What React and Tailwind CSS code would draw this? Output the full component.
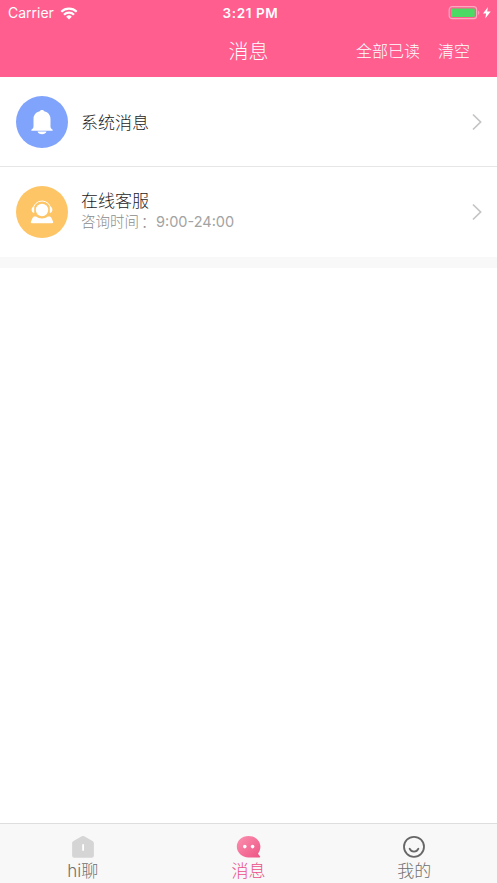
import React, { useState } from 'react';

const BellIcon = () => (
  <svg viewBox="0 0 52 52" className="w-full h-full" fill="#fff">
    <path d="M26 14c-1 0-1.800.5-2.200 1.300-4 .9-6.300 4-6.300 7.700v7.500c0 1.400-.8 2.200-1.900 3-.7.500-.5 1.200.2 1.200h20.400c.7 0 .9-.7.2-1.200-1.100-.8-1.900-1.600-1.900-3V23c0-3.700-2.300-6.800-6.300-7.700C27.800 14.500 27 14 26 14z" />
    <path d="M21.500 35.500h9c-.5 1.700-2.200 2.700-4.500 2.700s-4-1-4.500-2.700z" />
  </svg>
);

const ServiceIcon = () => (
  <svg viewBox="0 0 52 52" className="w-full h-full" fill="#fff">
    <circle cx="26" cy="24" r="6.200" />
    <path d="M17.200 23.500a8.800 8.500 0 0 1 17.600 0" fill="none" stroke="#fff" strokeWidth="1" />
    <path d="M18.200 20.500v6.500c-1.500 0-2.600-1.400-2.600-3.200s1.100-3.300 2.600-3.300zM33.800 20.500v6.500c1.500 0 2.600-1.400 2.600-3.200s-1.100-3.300-2.600-3.300z" />
    <path d="M18.800 30.500h1.300c1.600 1.200 3.600 1.900 5.900 1.900s4.300-.7 5.900-1.900h1.300c1.100 0 1.900.6 2.300 1.500l1.600 3.800c.3.700-.1 1.400-.9 1.400H15.800c-.8 0-1.200-.7-.9-1.400l1.600-3.800c.4-.9 1.200-1.500 2.300-1.500z" />
  </svg>
);

const WifiIcon = () => (
  <svg width="18" height="13" viewBox="0 0 18 13" fill="none" stroke="#fff" strokeWidth="2.300">
    <path d="M1.300 4.700a11 11 0 0 1 15.400 0" />
    <path d="M4 7.700a7 7 0 0 1 10 0" />
    <path d="M9 12.500L6.200 9.700a4 4 0 0 1 5.600 0z" fill="#fff" stroke="none" />
  </svg>
);

const BatteryIcon = () => (
  <svg width="43" height="14" viewBox="0 0 43 14">
    <rect x="1.200" y="0.700" width="27.400" height="12" rx="3" fill="none" stroke="#fff" strokeOpacity="0.450" strokeWidth="1.200" />
    <rect x="3" y="2.500" width="23.800" height="8.400" rx="1.200" fill="#4cd964" />
    <path d="M30.200 4.500c1.600.8 1.600 3.600 0 4.400z" fill="#fff" fillOpacity="0.450" />
    <path d="M40 .9L35 7.400h3.100l-.8 5.200 5.400-7h-3.500z" fill="#fff" />
  </svg>
);

const ArrowIcon = () => (
  <svg width="10" height="18" viewBox="0 0 10 18" fill="none" stroke="#c4c4c6" strokeWidth="1.700">
    <path d="M1 1.500L8.600 9 1 16.500" />
  </svg>
);

const HomeIcon = () => (
  <svg width="26" height="26" viewBox="0 0 26 26" className="shrink-0">
    <path d="M11.800 2.300a2.400 2.400 0 0 1 2.400 0l8.300 4.600a2.600 2.600 0 0 1 1.400 2.300v12.300a2.300 2.300 0 0 1-2.300 2.300H4.400a2.300 2.300 0 0 1-2.300-2.300V9.200c0-1 .5-1.800 1.400-2.300z" fill="#d5d5d5" />
    <rect x="12.200" y="10" width="1.800" height="7" rx="0.900" fill="#fff" />
  </svg>
);

const ChatIcon = () => (
  <svg width="26" height="26" viewBox="0 0 26 26" className="shrink-0">
    <defs>
      <linearGradient id="chat" x1="0" y1="0" x2="1" y2="1">
        <stop offset="0" stopColor="#fb91b1" />
        <stop offset="1" stopColor="#ee5485" />
      </linearGradient>
    </defs>
    <path d="M12.500 2C6 2 .8 6.600.8 12.600S6 23.500 12.500 23.500h10.800c1 0 1.200-.8.600-1.300l-1.900-2.500c1.500-1.900 2.400-4.300 2.400-7.100C24.400 6.600 19.200 2 12.500 2z" fill="url(#chat)" />
    <circle cx="8.800" cy="12.600" r="1.800" fill="#fff" />
    <circle cx="16.600" cy="12.600" r="1.800" fill="#fff" />
  </svg>
);

const SmileIcon = () => (
  <svg width="26" height="26" viewBox="0 0 26 26" fill="none" stroke="#666" strokeWidth="1.800" className="shrink-0">
    <circle cx="13" cy="12.800" r="10" />
    <path d="M8.600 14.700c1.800 4 7 4 8.800 0" strokeLinecap="round" />
  </svg>
);

const messages = [
  { title: '系统消息', color: 'bg-[#80a3fb]', icon: BellIcon },
  { title: '在线客服', desc: '咨询时间', time: '9:00-24:00', color: 'bg-[#fdc566]', icon: ServiceIcon },
];

const tabs = [
  { name: 'hi聊', icon: HomeIcon },
  { name: '消息', icon: ChatIcon },
  { name: '我的', icon: SmileIcon },
];

const App = () => {
  const [active, setActive] = useState(1);

  return (
    <div className="flex flex-col h-screen bg-white font-light font-['Inter','Noto_Sans_CJK_SC',sans-serif]">
      <header className="h-[77px] shrink-0 bg-[#ff5e8f] text-white">
        <div className="grid grid-cols-3 items-center h-[26px] pl-2 pr-1.5">
          <div className="flex items-center gap-1.5 text-sm font-normal">
            <span>Carrier</span>
            <WifiIcon />
          </div>
          <span className="text-center text-[13.500px] font-semibold tracking-[0.600px] pl-0.5">3:21 PM</span>
          <div className="flex justify-end">
            <BatteryIcon />
          </div>
        </div>
        <div className="grid grid-cols-[1fr_auto_1fr] items-center h-[50px] px-[27px]">
          <span />
          <h1 className="text-xl leading-none pt-0.5">消息</h1>
          <div className="flex justify-end gap-[18px] text-base leading-none">
            <button>全部已读</button>
            <button>清空</button>
          </div>
        </div>
      </header>

      <main className="flex-1">
        {messages.map((item, idx) => (
          <div
            key={item.title}
            className={`flex items-center h-[90px] pl-4 pr-[15px] ${idx === 0 ? 'border-b border-[#e6e6e6]' : ''}`}
          >
            <div className={`w-[52px] h-[52px] shrink-0 rounded-full ${item.color}`}>
              <item.icon />
            </div>
            <div className={`flex-1 ml-[13px] ${item.desc ? 'pb-[3px]' : 'pt-0.5'}`}>
              <p className="text-[17px] leading-[22px] text-[#1c1c1c]">{item.title}</p>
              {item.desc && (
                <p className="flex text-[14.500px] leading-5 text-[#8c8c8c]">
                  <span>{item.desc}</span>
                  <span className="w-[17px] pl-0.5">：</span>
                  <span className="font-normal text-[#a3a3a3]">{item.time}</span>
                </p>
              )}
            </div>
            <ArrowIcon />
          </div>
        ))}
        <div className="h-[11px] bg-[#f8f8f8]" />
      </main>

      <nav className="flex h-[60px] shrink-0 bg-[#f8f8f8] border-t border-[#dedede]">
        {tabs.map((tab, idx) => (
          <button
            key={tab.name}
            onClick={() => setActive(idx)}
            className={`flex-1 flex flex-col items-center pt-2.5 text-[17px] leading-[23px] ${
              active === idx ? 'text-[#ea4f88]' : 'text-[#707070]'
            }`}
          >
            <tab.icon />
            <span>{tab.name}</span>
          </button>
        ))}
      </nav>
    </div>
  );
};

export default App;
